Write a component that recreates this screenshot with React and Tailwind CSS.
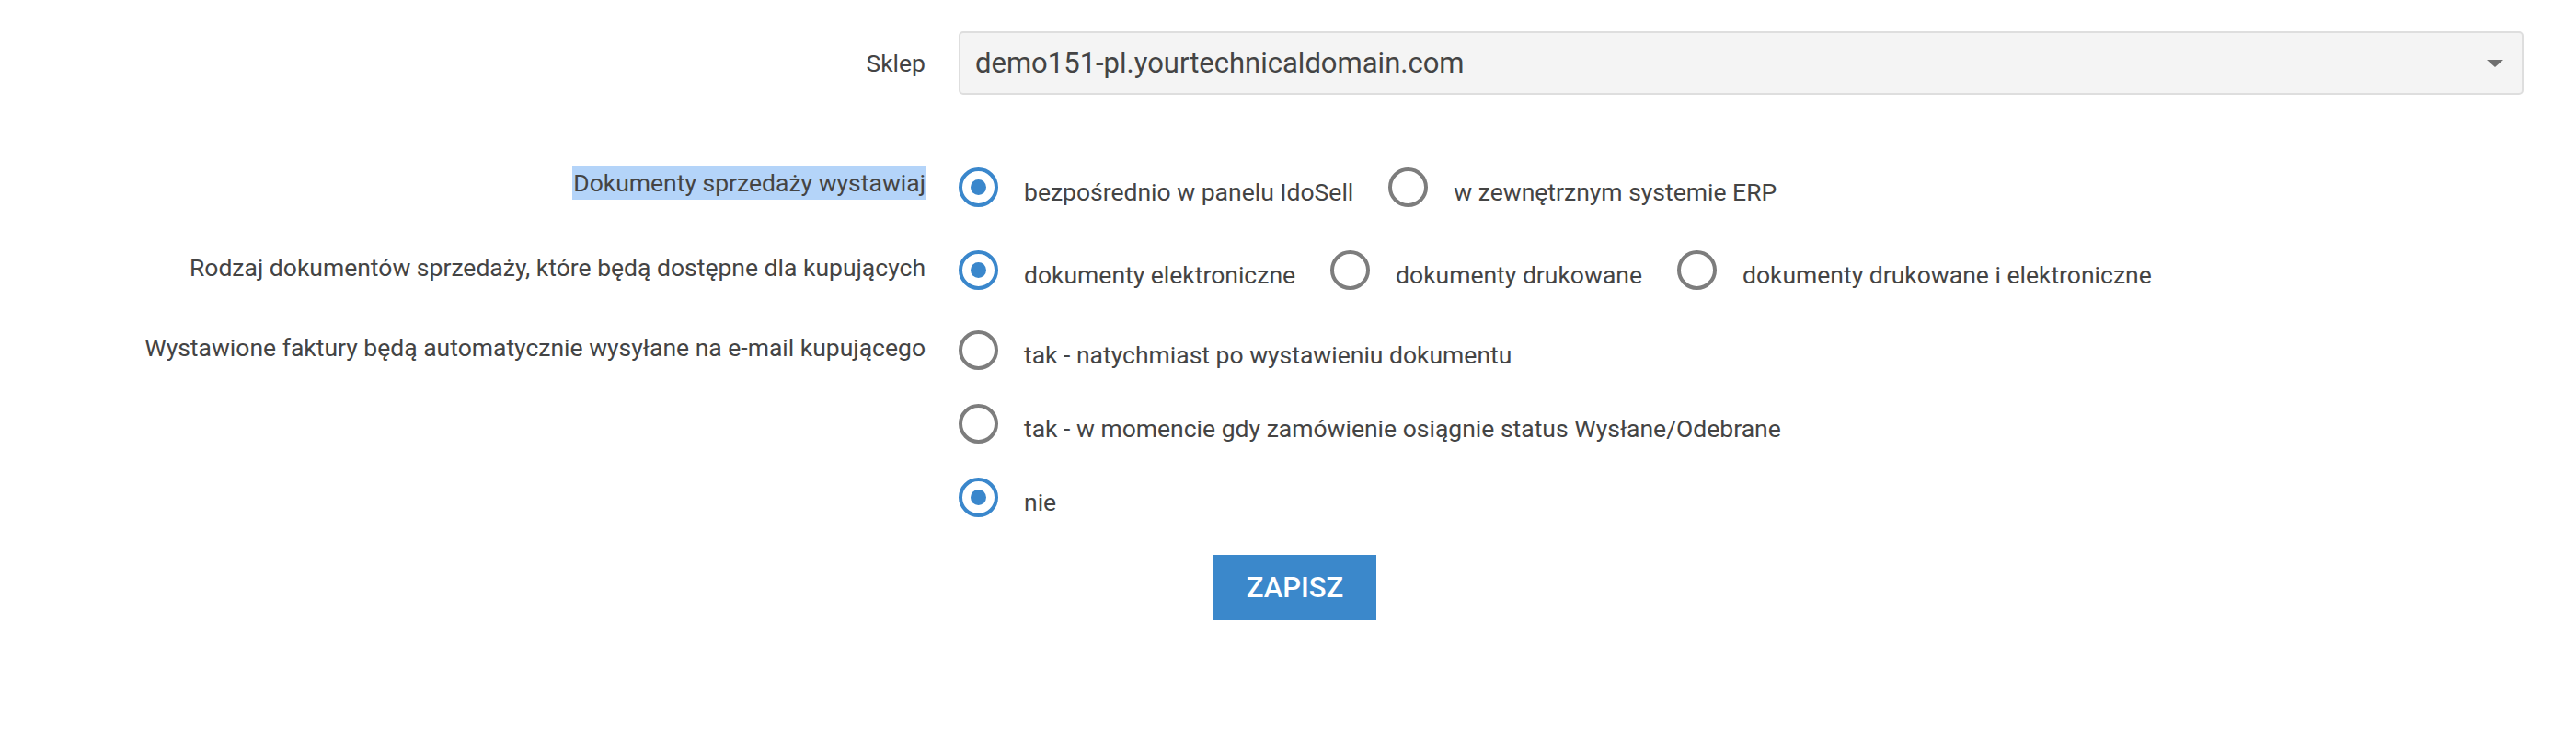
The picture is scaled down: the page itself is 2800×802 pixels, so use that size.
import React, { useState } from "react";

const Radio = ({ checked, label, onClick, className = "" }) => (
  <label onClick={onClick} className={`flex items-center cursor-pointer ${className}`}>
    <span
      className={`flex items-center justify-center w-[43px] h-[43px] shrink-0 rounded-full border-[4px] bg-white ${
        checked ? "border-[#3a87cc]" : "border-[#7d7d7d]"
      }`}
    >
      {checked && <span className="block w-[17px] h-[17px] rounded-full bg-[#3a87cc]" />}
    </span>
    <span className="relative top-[5px] ml-[28px] text-[26.5px] leading-[37px] text-[#444]">{label}</span>
  </label>
);

const App = () => {
  const [issuer, setIssuer] = useState("panel");
  const [docType, setDocType] = useState("electronic");
  const [autoSend, setAutoSend] = useState("no");

  return (
    <div className="min-h-screen bg-white font-['Roboto',sans-serif] text-[#444]">
      <form
        onSubmit={(e) => e.preventDefault()}
        className="grid grid-cols-[1006px_minmax(0,1fr)] gap-x-[36px] pr-[57px] pt-[34px]"
      >
        {/* sklep */}
        <div className="flex items-center justify-end h-[69px]">
          <span className="text-[26.5px] leading-[37px]">Sklep</span>
        </div>
        <div className="relative flex items-center h-[69px] bg-[#f4f4f4] border-2 border-[#dedede] rounded-[5px] pl-[16px] pr-[50px]">
          <span className="text-[31px] leading-none text-[#444]">demo151-pl.yourtechnicaldomain.com</span>
          <svg className="absolute right-[20px] top-1/2 -translate-y-1/2" width="18" height="8" viewBox="0 0 18 8">
            <polygon points="0,0 18,0 9,8" fill="#6f6f6f" />
          </svg>
        </div>

        {/* dokumenty sprzedazy wystawiaj */}
        <div className="flex items-start justify-end mt-[77px]">
          <span className="text-[26.5px] leading-[37px] bg-[#b4d4f9] pl-[1px]">Dokumenty sprzedaży wystawiaj</span>
        </div>
        <div className="flex items-center mt-[79px]">
          <Radio checked={issuer === "panel"} onClick={() => setIssuer("panel")} label="bezpośrednio w panelu IdoSell" />
          <Radio
            className="ml-[38px]"
            checked={issuer === "erp"}
            onClick={() => setIssuer("erp")}
            label="w zewnętrznym systemie ERP"
          />
        </div>

        {/* rodzaj dokumentow */}
        <div className="flex items-start justify-end mt-[47px]">
          <span className="text-[26.5px] leading-[37px]">Rodzaj dokumentów sprzedaży, które będą dostępne dla kupujących</span>
        </div>
        <div className="flex items-center mt-[47px]">
          <Radio
            checked={docType === "electronic"}
            onClick={() => setDocType("electronic")}
            label="dokumenty elektroniczne"
          />
          <Radio
            className="ml-[38px]"
            checked={docType === "printed"}
            onClick={() => setDocType("printed")}
            label="dokumenty drukowane"
          />
          <Radio
            className="ml-[38px]"
            checked={docType === "both"}
            onClick={() => setDocType("both")}
            label="dokumenty drukowane i elektroniczne"
          />
        </div>

        {/* wysylka faktur */}
        <div className="flex items-start justify-end mt-[44px]">
          <span className="text-[26.5px] leading-[37px]">Wystawione faktury będą automatycznie wysyłane na e-mail kupującego</span>
        </div>
        <div className="flex flex-col gap-[37px] mt-[44px]">
          <Radio
            checked={autoSend === "now"}
            onClick={() => setAutoSend("now")}
            label="tak - natychmiast po wystawieniu dokumentu"
          />
          <Radio
            checked={autoSend === "sent"}
            onClick={() => setAutoSend("sent")}
            label="tak - w momencie gdy zamówienie osiągnie status Wysłane/Odebrane"
          />
          <Radio checked={autoSend === "no"} onClick={() => setAutoSend("no")} label="nie" />
        </div>

        <div />
        <div className="mt-[41px]">
          <button
            type="submit"
            className="ml-[277px] w-[177px] h-[71px] bg-[#3b88cb] text-white text-[31px] leading-none font-medium uppercase"
          >
            Zapisz
          </button>
        </div>
      </form>
    </div>
  );
};

export default App;
